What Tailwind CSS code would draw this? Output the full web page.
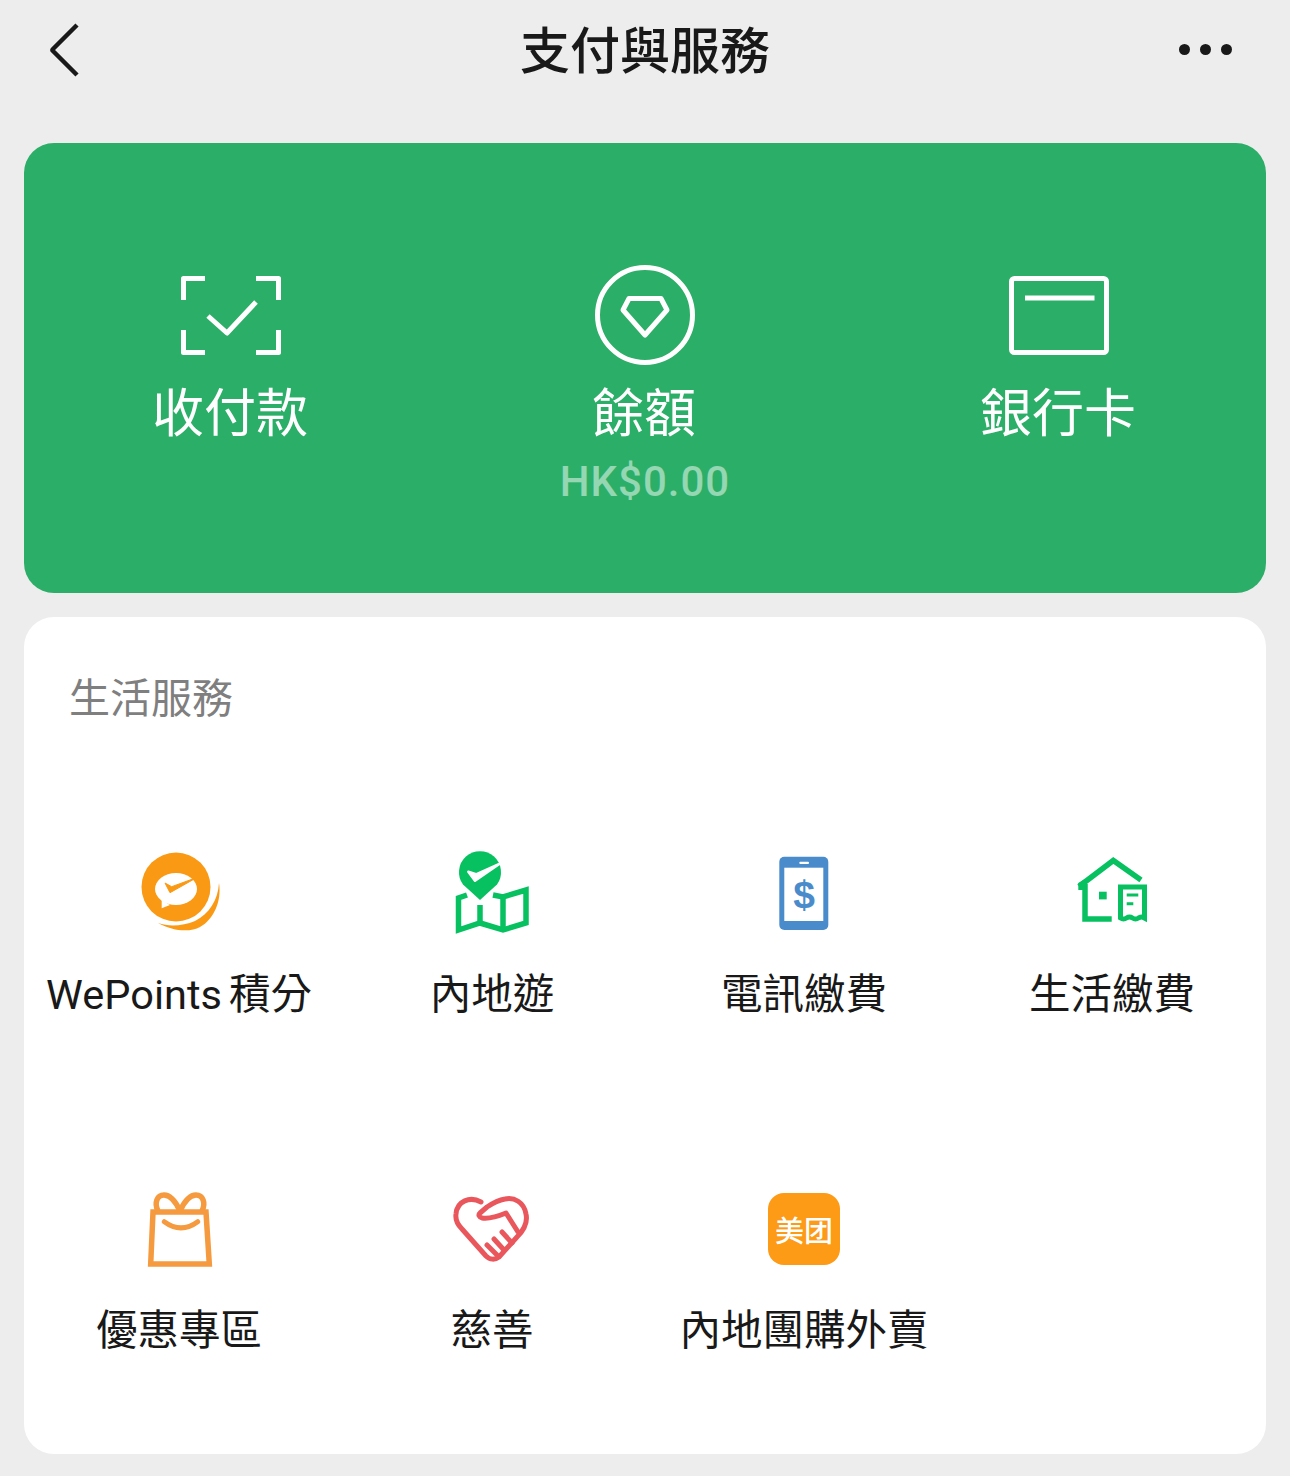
<!DOCTYPE html>
<html lang="zh-Hant">

<head>
    <meta charset="UTF-8">
    <meta name="viewport" content="width=device-width, initial-scale=1.0">
    <title>支付與服務</title>
    <script src="https://cdn.jsdelivr.net/npm/@tailwindcss/browser@4"></script>
</head>

<body class="bg-[#ededed] w-[1290px] h-[1476px] overflow-hidden font-['Roboto','Noto_Sans_CJK_TC',sans-serif]">

    <!-- header -->
    <header class="h-[100px] mb-[43px] grid grid-cols-[1fr_auto_1fr] items-center pl-[48px] pr-[58px] text-[#191919]">
        <svg class="w-[34px] h-[54px]" viewBox="0 0 34 54" fill="none" stroke="#191919" stroke-width="4.500">
            <path d="M29 2 L5 26 Q4 27 5 28 L29 52" />
        </svg>
        <h1 class="text-[50px] leading-none font-medium pt-[4px] ml-[10px]">支付與服務</h1>
        <div class="flex gap-[10px] justify-end pb-[2px]">
            <span class="w-[11px] h-[11px] rounded-full bg-[#191919]"></span>
            <span class="w-[11px] h-[11px] rounded-full bg-[#191919]"></span>
            <span class="w-[11px] h-[11px] rounded-full bg-[#191919]"></span>
        </div>
    </header>

    <!-- green card -->
    <section class="mx-[24px] h-[450px] bg-[#2bae67] rounded-[30px] grid grid-cols-3 pt-[122px] text-white text-center">
        <div class="flex flex-col items-center">
            <svg class="w-[104px] h-[100px]" viewBox="179 265 104 100" fill="none" stroke="#fff" stroke-width="5" stroke-linejoin="round">
                <path d="M205 278.500 H183.500 V300 M256 278.500 H278.500 V300 M183.500 330 V352.500 H205 M278.500 330 V352.500 H256" />
                <path d="M208 316 L227 333 L256 302" />
            </svg>
            <div class="mt-[24px] pr-[2px] text-[52px] leading-[52px]">收付款</div>
        </div>
        <div class="flex flex-col items-center">
            <svg class="w-[104px] h-[100px]" viewBox="593 265 104 100" fill="none" stroke="#fff" stroke-width="5">
                <circle cx="645" cy="315" r="47.500" />
                <path d="M629 298.500 H661 L667 310 L645 335 L623 310 Z" stroke-linejoin="round" />
            </svg>
            <div class="mt-[24px] pr-[2px] text-[52px] leading-[52px]">餘額</div>
            <div class="mt-[17px] text-[42px] leading-[48px] font-medium text-white/50 tracking-[1px]">HK$0.00</div>
        </div>
        <div class="flex flex-col items-center">
            <svg class="w-[104px] h-[100px]" viewBox="1007 265 104 100" fill="none" stroke="#fff" stroke-width="5">
                <rect x="1011.500" y="278.500" width="95" height="74" rx="3" />
                <path d="M1025 298 H1094.500" />
            </svg>
            <div class="mt-[24px] pr-[2px] text-[52px] leading-[52px]">銀行卡</div>
        </div>
    </section>

    <!-- services card -->
    <section class="mx-[24px] mt-[24px] h-[837px] bg-white rounded-[30px]">
        <h2 class="pl-[45px] pt-[58px] text-[41px] leading-[48px] text-[#7f7f7f]">生活服務</h2>
        <div class="grid grid-cols-[310px_316px_308px_308px] auto-rows-[336px] mt-[119px] text-[41.500px] leading-[48px] text-[#191919] text-center">

            <div class="flex flex-col items-center">
                <svg class="w-[100px] h-[100px] mb-[29px] shrink-0" viewBox="0 0 100 100" fill="none">
                    <circle cx="47" cy="45" r="34.500" fill="#fa9a14" />
                    <path d="M29 81 C45 90 62 90 71 85 C84 78 93 60 90 41 C89 58 80 72 66 79 C54 84 40 85 29 81 Z" fill="#fa9a14" />
                    <ellipse cx="47" cy="47" rx="21" ry="16" fill="#fff" />
                    <path d="M32.700 58 L32.700 66.300 L41 63 Z" fill="#fff" />
                    <path d="M36 41 L41 50.700 L68.300 35.300 L42.700 44.700 Z" fill="#fa9a14" stroke="#fa9a14" stroke-width="1" stroke-linejoin="round" />
                </svg>
                <span class="whitespace-nowrap">WePoints<span class="ml-[7px]">積分</span></span>
            </div>

            <div class="flex flex-col items-center">
                <svg class="w-[100px] h-[100px] mb-[29px] shrink-0" viewBox="0 0 100 100" fill="none">
                    <path d="M38 58 L21 42.500 A21 21 0 1 1 55 42.500 Z" fill="#07c160" />
                    <path d="M26.300 29.700 L33 38.700 L57.300 22 L34 32.300 Z" fill="#fff" stroke="#fff" stroke-width="2.500" stroke-linejoin="round" />
                    <path d="M25 53 L16.500 56 V88 L38 81 L61 88 L84 81 V48 L61 55 L51 53" stroke="#07c160" stroke-width="5.500" />
                    <path d="M38 63 V81 M61 55 V88" stroke="#07c160" stroke-width="5.500" />
                </svg>
                <span class="whitespace-nowrap">內地遊</span>
            </div>

            <div class="flex flex-col items-center">
                <svg class="w-[100px] h-[100px] mb-[29px] shrink-0" viewBox="0 0 100 100" fill="none">
                    <rect x="25.300" y="14.700" width="49" height="73.300" rx="5" fill="#4a8ccb" />
                    <rect x="30.300" y="25.700" width="39" height="53.300" fill="#fff" />
                    <rect x="45.300" y="19.700" width="9.700" height="2.300" rx="1" fill="#fff" />
                    <text x="50" y="66" text-anchor="middle" font-family="'Liberation Sans', sans-serif" font-weight="700" font-size="39" fill="#4a8ccb">$</text>
                </svg>
                <span class="whitespace-nowrap">電訊繳費</span>
            </div>

            <div class="flex flex-col items-center">
                <svg class="w-[100px] h-[100px] mb-[29px] shrink-0" viewBox="0 0 100 100" fill="none">
                    <path d="M17 44.500 L51.300 18.500 L79 38" stroke="#07c160" stroke-width="5.500" />
                    <path d="M23 42 V77 H49.700" stroke="#07c160" stroke-width="5.500" />
                    <path d="M16.300 41 L23 37 V48 H16.300 Z" fill="#07c160" />
                    <rect x="37" y="49.700" width="7.700" height="7.700" fill="#07c160" />
                    <path d="M58.500 45 H82.500 V76 Q79 74 76.500 76 Q73.500 78 70.500 76 Q67.500 74 64.500 76 Q61.500 78 58.500 76 Z" stroke="#07c160" stroke-width="5" />
                    <path d="M64.700 53 H76.300 M64.700 61.700 H71.300" stroke="#07c160" stroke-width="3" />
                </svg>
                <span class="whitespace-nowrap">生活繳費</span>
            </div>

            <div class="flex flex-col items-center">
                <svg class="w-[100px] h-[100px] mb-[29px] shrink-0" viewBox="0 0 100 100" fill="none" stroke="#f59a3f" stroke-width="5.500">
                    <path d="M24 34 H77 L80.300 86 H21.700 Z" />
                    <path d="M51 33 C46 22 40 17 35 17 C28 17 25 25 29 33 M51 33 C56 22 62 17 67 17 C74 17 77 25 73 33" />
                    <path d="M35.300 43.700 Q52 56 68.700 43.700" stroke-linecap="round" stroke-width="5" />
                </svg>
                <span class="whitespace-nowrap">優惠專區</span>
            </div>

            <div class="flex flex-col items-center">
                <svg class="w-[100px] h-[100px] mb-[29px] shrink-0" viewBox="0 0 100 100" fill="none" stroke="#e9575c" stroke-width="5" stroke-linecap="round" stroke-linejoin="round">
                    <g transform="translate(2,7)">
                        <path d="M37 17 C26 11 13 16 12 29 C11 36 14 40 18 44 L42 71 C46 75 51 75 55 72 L73 52 C80 45 84 38 82 29 C80 17 70 12 61 14 C55 15 49 18 43 22 L36 28 C34 30 35 32 38 33 C44 34 50 33 62 28 L74 47" />
                        <path d="M43 60 L53 70 M50 54 L60 65 M58 47 L68 58" />
                    </g>
                </svg>
                <span class="whitespace-nowrap">慈善</span>
            </div>

            <div class="flex flex-col items-center">
                <div class="w-[100px] h-[100px] mb-[29px] pt-[2px] shrink-0 flex items-center justify-center">
                    <div class="w-[72px] h-[72px] rounded-[16px] bg-[#fd9a16] text-white text-[29px] leading-none font-medium flex items-center justify-center font-['Noto_Sans_CJK_SC',sans-serif]">美团</div>
                </div>
                <span class="whitespace-nowrap">內地團購外賣</span>
            </div>
        </div>
    </section>

</body>

</html>
